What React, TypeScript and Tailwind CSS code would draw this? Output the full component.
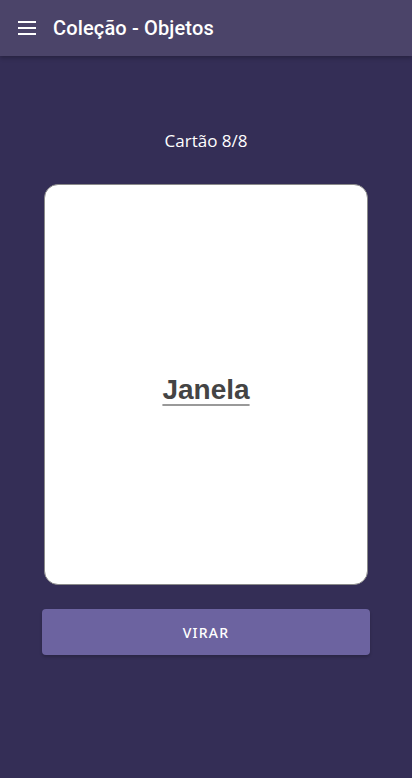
import React from "react";

export default function App() {
  return (
    <div className="w-[412px] h-[778px] bg-[#342e56] flex flex-col overflow-hidden">
      {/* App bar */}
      <header className="h-[56px] shrink-0 bg-[#4b4469] flex items-center px-4 gap-[14px] shadow-[0_2px_4px_rgba(0,0,0,0.25)] z-10">
        <svg width="24" height="24" viewBox="0 0 24 24" className="-ml-[1px]">
          <path d="M3 6h18M3 12h18M3 18h18" stroke="#ffffff" strokeWidth="2" />
        </svg>
        <span className="text-white text-[20px] font-medium font-['Roboto',sans-serif] tracking-[0.15px]">
          Coleção - Objetos
        </span>
      </header>

      <main className="flex flex-col items-center px-[42px]">
        <p className="mt-[73px] text-white text-[17px] font-['Open_Sans',sans-serif] leading-[24px]">
          Cartão 8/8
        </p>

        <div className="mt-[31px] w-[324px] h-[401px] bg-white rounded-[14px] border border-[#8a8a8a] flex items-center justify-center pt-[10px]">
          <span className="text-[#444444] text-[28px] font-bold underline underline-offset-[5px] decoration-[2px] decoration-[#999999] font-['Liberation_Sans',Arial,sans-serif]">
            Janela
          </span>
        </div>

        <button className="mt-[24px] w-[328px] h-[46px] bg-[#6c63a0] rounded-[4px] text-white text-[14px] font-medium tracking-[1.25px] font-['Noto_Sans',sans-serif] shadow-[0_2px_3px_rgba(0,0,0,0.2)]">
          VIRAR
        </button>
      </main>
    </div>
  );
}
